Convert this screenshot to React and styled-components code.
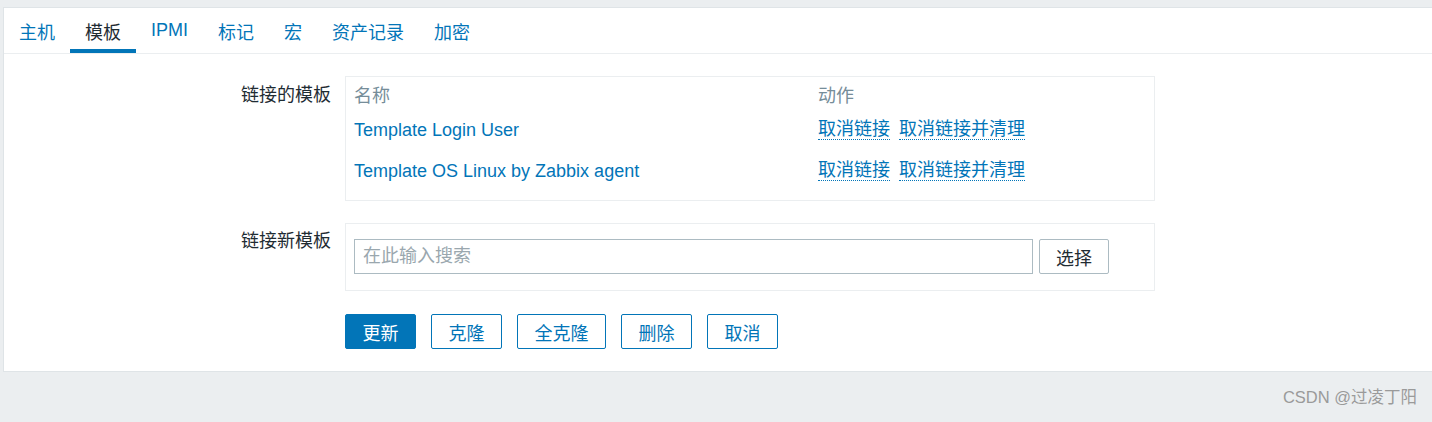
import React from 'react'
import styled, { createGlobalStyle } from 'styled-components'

const GlobalStyle = createGlobalStyle`
  html, body {
    margin: 0;
    padding: 0;
    background: #ebeef0;
  }
  body {
    font-family: "Liberation Sans", Arial, "Noto Sans CJK SC", sans-serif;
    font-size: 18px;
    color: #1f2c33;
  }
  * { box-sizing: border-box; }
`

const Page = styled.div`
  padding: 7px 0 0 3px;
  height: 422px;
  display: flex;
  flex-direction: column;
`

const Panel = styled.div`
  background: #fff;
  border: 1px solid #dfe4e7;
  border-right: none;
  padding-bottom: 22px;
`

const TabBar = styled.ul`
  display: flex;
  margin: 0;
  padding: 0;
  list-style: none;
  border-bottom: 1px solid #ebeef0;
`

const Tab = styled.li`
  height: 45px;
  padding: 0 15px;
  display: flex;
  align-items: center;
  color: ${p => (p.$active ? '#1f2c33' : '#0275b8')};
  box-shadow: ${p => (p.$active ? 'inset 0 -4px 0 #0275b8' : 'none')};
  cursor: pointer;
`

const Form = styled.div`
  display: grid;
  grid-template-columns: 327px 810px;
  column-gap: 14px;
  row-gap: 22px;
  padding-top: 22px;
`

const Label = styled.div`
  text-align: right;
  line-height: 22px;
  padding-top: ${p => p.$top || 8}px;
`

const Box = styled.div`
  border: 1px solid #ebeef0;
  padding: ${p => p.$pad || '0 8px 11px'};
`

const Grid = styled.div`
  display: grid;
  grid-template-columns: 464px auto;
  line-height: 22px;
`

const HeadCell = styled.div`
  color: #768d99;
  padding-top: 8px;
`

const Cell = styled.div`
  padding: 12px 0 7px;
  display: flex;
  gap: 9px;
  align-items: flex-start;
`

const NameLink = styled.a`
  color: #0275b8;
  text-decoration: none;
  cursor: pointer;
`

const ActionLink = styled.a`
  color: #0275b8;
  line-height: 20px;
  border-bottom: 1px dotted #0275b8;
  cursor: pointer;
`

const SearchRow = styled.div`
  display: flex;
  gap: 6px;
`

const Input = styled.input`
  width: 679px;
  height: 35px;
  border: 1px solid #acbbc2;
  padding: 0 8px;
  font: inherit;
  color: #1f2c33;
  outline: none;
  &::placeholder { color: #9aa7ae; }
`

const Button = styled.button`
  height: 35px;
  width: ${p => p.$w || 71}px;
  padding: 0;
  font: inherit;
  border-radius: 2px;
  cursor: pointer;
  background: ${p => (p.$primary ? '#0275b8' : '#fff')};
  color: ${p => (p.$primary ? '#fff' : p.$plain ? '#1f2c33' : '#0275b8')};
  border: 1px solid ${p => (p.$plain ? '#acbbc2' : '#0275b8')};
`

const Actions = styled.div`
  grid-column: 2;
  display: flex;
  gap: 15px;
  padding-top: 1px;
`

const Footer = styled.div`
  flex: 1;
  display: flex;
  justify-content: flex-end;
  align-items: center;
  padding: 0 15px 2px 0;
  color: #9a9a9a;
  font-size: 16.5px;
`

const templates = ['Template Login User', 'Template OS Linux by Zabbix agent']
const tabs = ['主机', '模板', 'IPMI', '标记', '宏', '资产记录', '加密']

export default function App() {
  return (
    <>
      <GlobalStyle />
      <Page>
        <Panel>
          <TabBar>
            {tabs.map(t => (
              <Tab key={t} $active={t === '模板'}>{t}</Tab>
            ))}
          </TabBar>
          <Form>
            <Label>链接的模板</Label>
            <Box>
              <Grid>
                <HeadCell>名称</HeadCell>
                <HeadCell>动作</HeadCell>
                {templates.map(t => (
                  <React.Fragment key={t}>
                    <Cell><NameLink>{t}</NameLink></Cell>
                    <Cell>
                      <ActionLink>取消链接</ActionLink>
                      <ActionLink>取消链接并清理</ActionLink>
                    </Cell>
                  </React.Fragment>
                ))}
              </Grid>
            </Box>

            <Label $top={7}>链接新模板</Label>
            <Box $pad="15px 8px 16px">
              <SearchRow>
                <Input placeholder="在此输入搜索" />
                <Button $plain $w={70}>选择</Button>
              </SearchRow>
            </Box>

            <Actions>
              <Button $primary>更新</Button>
              <Button>克隆</Button>
              <Button $w={89}>全克隆</Button>
              <Button>删除</Button>
              <Button>取消</Button>
            </Actions>
          </Form>
        </Panel>
        <Footer>CSDN @过凌丁阳</Footer>
      </Page>
    </>
  )
}
